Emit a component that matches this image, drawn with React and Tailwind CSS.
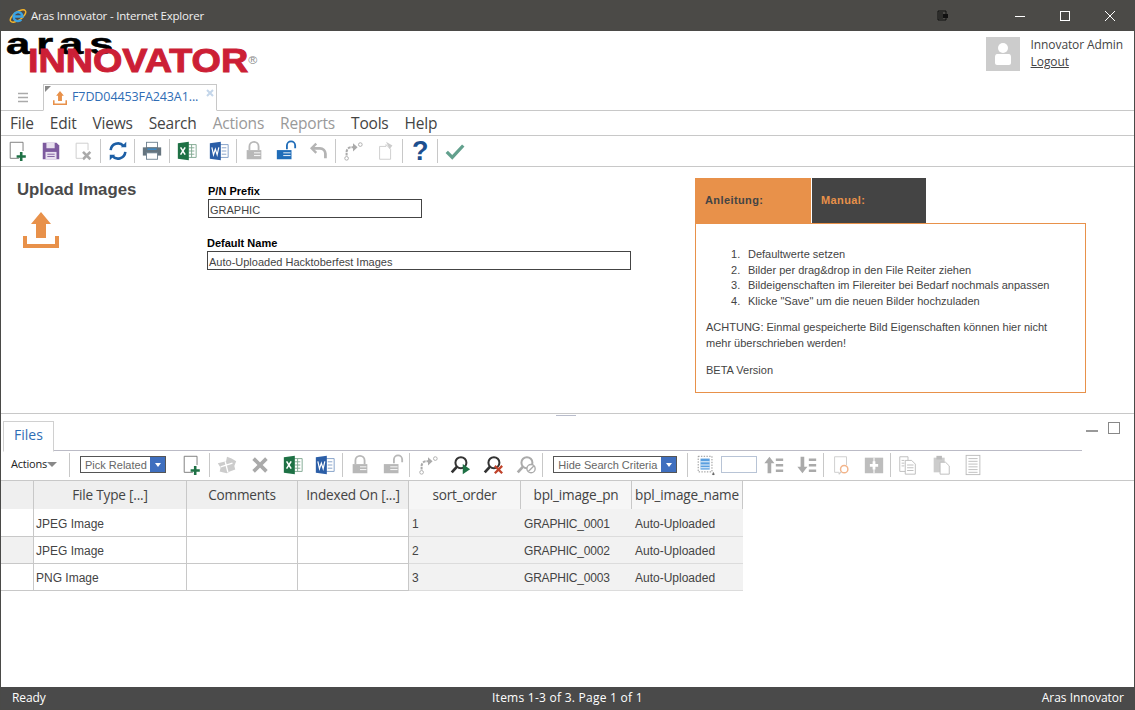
import React from "react";

const seg = "font-['Open_Sans',sans-serif]";
const tah = "font-['Liberation_Sans',sans-serif]";

const I = ({ children, o = 1 }) => (
  <svg width="22" height="22" viewBox="0 0 24 24" fill="none" style={{ opacity: o }}>{children}</svg>
);
const Btn = ({ children }) => <div className="w-[32.5px] h-6 flex items-center justify-center shrink-0">{children}</div>;
const Bt2 = ({ children }) => <div className="w-[32.75px] h-6 flex items-center justify-center shrink-0">{children}</div>;
const Sep = () => <div className="w-px h-[24px] mr-[1px] bg-[#c8c8c8] shrink-0" />;

const New = () => <I><path d="M13 20H3.500V2.500H17.500V12" stroke="#777" /><path d="M15.500 13v10M10.500 18h10" stroke="#1e7145" strokeWidth="2.800" /></I>;
const Save = () => <I><path d="M3 3h15l3 3v15H3z" fill="#7d5a9e" /><rect x="7" y="3" width="9" height="6" fill="#e8e0ef" /><rect x="6" y="13" width="12" height="8" fill="#e8e0ef" /><path d="M8 15.500h8M8 18h8" stroke="#7d5a9e" /></I>;
const Del = () => <I><path d="M11 20H4.500V3.500H17.500V11" stroke="#ccc" /><path d="M12 13l8 8M20 13l-8 8" stroke="#aaa" strokeWidth="2.800" /></I>;
const Refresh = () => <I><path d="M4 11a8 8 0 0 1 14-4.500M20 13a8 8 0 0 1-14 4.500" stroke="#1d5fa5" strokeWidth="2.800" /><path d="M15 8h6V2zM9 16H3v6z" fill="#1d5fa5" /></I>;
const Print = () => <I><rect x="6" y="2.500" width="12" height="6" fill="#fff" stroke="#6d8190" /><path d="M2 8h20v9H2z" fill="#66757f" /><path d="M7 10h10" stroke="#3b8fd0" strokeWidth="1.500" /><rect x="6" y="14" width="12" height="7" fill="#fff" stroke="#6d8190" /></I>;
const Excel = () => <I><path d="M12 5h10v14H12z" fill="#fff" stroke="#7ea68f" /><path d="M14 8.500h6M14 12h6M14 15.500h6M17 5v14" stroke="#7ea68f" /><path d="M2 3.500l12-1.500v20L2 20.500z" fill="#1e7145" /><path d="M5 8l5 8M10 8l-5 8" stroke="#fff" strokeWidth="1.700" /></I>;
const Word = () => <I><path d="M12 5h10v14H12z" fill="#fff" stroke="#7f9cc6" /><path d="M15 8.500h5M15 12h5M15 15.500h5" stroke="#7f9cc6" /><path d="M2 3.500l12-1.500v20L2 20.500z" fill="#2b5ea7" /><path d="M4.200 8l1.800 8 2-6 2 6 1.800-8" stroke="#fff" strokeWidth="1.300" /></I>;
const Lock = ({ c = "#b8b8b8" }) => <I><path d="M7 11V7a5 5 0 0 1 10 0v4" stroke={c} strokeWidth="2" /><path d="M4 11h16v10H4z" fill={c} /><path d="M12 14h7M12 17h7" stroke="#fff" /></I>;
const Unlock = ({ c = "#1f6cb8" }) => <I><path d="M13 10V6a4.500 4.500 0 0 1 9 0v3" stroke={c} strokeWidth="2" /><path d="M2 11h16v10H2z" fill={c} /><path d="M9 14h8M9 17h8" stroke="#fff" /></I>;
const Undo = () => <I><path d="M9 14L4 9l5-5" stroke="#b4b4b4" strokeWidth="2.600" /><path d="M5 9h8a6 6 0 0 1 6 6v5" stroke="#b4b4b4" strokeWidth="3" /></I>;
const Promote = () => <I><circle cx="20" cy="5" r="2" stroke="#aaa" /><circle cx="5" cy="20" r="2" stroke="#aaa" /><path d="M5 17v-4a5 5 0 0 1 5-5h2" stroke="#aaa" strokeWidth="2.200" strokeDasharray="3 1" /><path d="M12 3.500l5 4.500-5 4.500z" fill="#aaa" /></I>;
const DocArrow = () => <I><path d="M5 7h7V5l5 5v11H5z" stroke="#ccc" fill="#fff" /><path d="M12 2l7 4-3 4z" fill="#ccc" /></I>;
const Check = () => <I><path d="M3 13l6 6L21 6" stroke="#62a08d" strokeWidth="3.600" /></I>;
const Glass = ({ c = "#333" }) => <><circle cx="13" cy="9.500" r="6" stroke={c} strokeWidth="2.200" /><path d="M8.500 14L3 20" stroke={c} strokeWidth="3" /></>;
const SearchGo = () => <I><Glass /><path d="M15 11l8 5.500-8 5.500z" fill="#1e7145" /></I>;
const SearchX = () => <I><Glass /><path d="M14 13l8 8M22 13l-8 8" stroke="#c0432b" strokeWidth="2.500" /></I>;
const SearchNo = () => <I><Glass c="#aaa" /><circle cx="17.500" cy="16" r="4.500" fill="#fff" stroke="#aaa" strokeWidth="1.500" /><path d="M14.500 19l6-6" stroke="#aaa" strokeWidth="1.500" /></I>;
const Puzzle = () => <I><path d="M2 10l9-2 1-5 5 2 5 3-2 5 1 4-6 2-3 2-5-1-3-1 1-4z" fill="#ccc" /><path d="M10 8l3 12M5 14l13-4" stroke="#fff" strokeWidth="1.500" /></I>;
const BigX = () => <I><path d="M5 5l14 14M19 5L5 19" stroke="#aaa" strokeWidth="4" /></I>;
const SelectAll = () => <I><rect x="3.500" y="2.500" width="15" height="17" stroke="#888" strokeDasharray="1.500 1.500" /><rect x="6" y="5" width="10" height="12" fill="#5a9fe0" /><path d="M6 8.500h10M6 12h10M6 15h10" stroke="#fff" /><path d="M20 20v3M18.500 22h3" stroke="#555" /></I>;
const SortUp = () => <I><path d="M7 3l5.500 7H9v11H5V10H1.500z" fill="#aaa" /><path d="M14 5h8v2.500h-8zM14 11h8v2.500h-8zM14 17h8v2.500h-8z" fill="#aaa" /></I>;
const SortDown = () => <I><path d="M7 21l5.500-7H9V3H5v11H1.500z" fill="#aaa" /><path d="M14 5h8v2.500h-8zM14 11h8v2.500h-8zM14 17h8v2.500h-8z" fill="#aaa" /></I>;
const DocSearch = () => <I><path d="M10 20H5V3h13v9" stroke="#ccc" /><circle cx="15.500" cy="16.500" r="4" stroke="#f2b48a" strokeWidth="1.600" /><path d="M12 19.500l-2.500 2.500" stroke="#ccc" strokeWidth="1.500" /></I>;
const Cross = () => <I><path d="M2 4h20v17H2z" fill="#bdbdbd" /><path d="M12 4v17" stroke="#fff" strokeWidth="1.200" /><path d="M12 8v9M7.500 12.500h9" stroke="#fff" strokeWidth="3" /></I>;
const CopyD = () => <I><path d="M3 3h9v16H3z" fill="#fff" stroke="#bbb" /><path d="M9 7h7l4 4v11H9z" fill="#fff" stroke="#bbb" /><path d="M5 7h3M5 10h3M5 13h3M11 12h7M11 15h7M11 18h7" stroke="#bbb" /></I>;
const Paste = () => <I><path d="M4 4h12v16H4z" fill="#ccc" /><rect x="7" y="2" width="6" height="4" fill="#bbb" /><path d="M11 9h6l4 4v9H11z" fill="#fff" stroke="#bbb" /></I>;
const Lines = () => <I><rect x="4.500" y="1.500" width="15" height="21" stroke="#bbb" fill="#fff" /><path d="M7 5h10M7 8h10M7 11h10M7 14h10M7 17h10M7 20h10" stroke="#bbb" /></I>;
const UploadIcon = ({ s }) => (
  <svg width={s} height={s} viewBox="0 0 36 36" fill="#e8914a"><path d="M18 0L28 12H23V26H13V12H8zM0 24H4V32H32V24H36V36H0z" /></svg>
);

const Caret = () => (
  <div className="w-[15px] h-full bg-[#3f6fbf] flex items-center justify-center">
    <div className="w-0 h-0 border-x-[3.500px] border-x-transparent border-t-[4px] border-t-white" />
  </div>
);
const Sel = ({ label, cls }) => (
  <div className={`h-[17px] border border-[#555] flex items-stretch shrink-0 ${cls}`}>
    <div className={`flex-1 pl-[4px] text-[11px] leading-[16px] text-[#666] whitespace-nowrap ${tah}`}>{label}</div>
    <Caret />
  </div>
);

const colCls = "grid grid-cols-[33px_153px_111px_111px_112px_111px_111px]";
const Row = ({ type, n, pn, h, odd }) => (
  <div className={`${colCls} w-[742px] ${h} text-[12px] text-[#444] ${tah}`}>
    <div className={`border-r border-b border-[#c8c8c8] ${odd ? "bg-white" : "bg-[#f1f1f1]"}`} />
    <div className="border-r border-b border-[#c8c8c8] pl-[2px] pt-[2px] flex items-center bg-white">{type}</div>
    <div className="border-r border-b border-[#c8c8c8] bg-white" />
    <div className="border-r border-b border-[#c8c8c8] bg-white" />
    <div className="border-b border-[#dcdcdc] bg-[#f2f2f2] pl-[3px] pt-[2px] flex items-center">{n}</div>
    <div className="border-b border-[#dcdcdc] bg-[#f2f2f2] pl-[3px] pt-[2px] flex items-center tracking-[-0.2px]">{pn}</div>
    <div className="border-b border-[#dcdcdc] bg-[#f2f2f2] pl-[3px] pt-[2px] flex items-center">Auto-Uploaded</div>
  </div>
);
const Li = ({ n, children }) => <li className="flex"><span className="w-[17px] shrink-0">{n}.</span><span>{children}</span></li>;

export default function App() {
  return (
    <div className={`w-[1135px] h-[710px] flex flex-col overflow-hidden bg-white border-x border-b border-[#4a4a48] ${seg}`}>
      {/* title bar */}
      <div className="h-[31px] bg-[#4b4a47] flex items-center shrink-0 text-white">
        <div className="ml-[8px] mr-[4px] w-[18px] h-[18px]">
          <svg width="18" height="18" viewBox="0 0 18 18" fill="none">
            <ellipse cx="9" cy="9" rx="9" ry="4" transform="rotate(-35 9 9)" stroke="#f3b32a" strokeWidth="1.500" />
            <path d="M4.500 9.500h9a4.500 4.500 0 1 0-1.200 3.200" stroke="#3aa3e3" strokeWidth="2.400" />
          </svg>
        </div>
        <div className="text-[11.500px] text-[#f0f0f0] tracking-[-0.2px]">Aras Innovator - Internet Explorer</div>
        <div className="ml-auto flex items-center">
          <svg width="12" height="12" viewBox="0 0 12 12" fill="none" className="mr-[65px]"><path d="M1 1h8v9H1z" stroke="#111" /><path d="M3 2v7M5 2v7" stroke="#111" /><rect x="6" y="4" width="5" height="4" fill="#111" /></svg>
          <svg width="12" height="12" viewBox="0 0 12 12" className="mr-[33px]"><path d="M1 6.500h10" stroke="#fff" /></svg>
          <svg width="12" height="12" viewBox="0 0 12 12" fill="none" className="mr-[33px]"><rect x="1.500" y="1.500" width="9" height="9" stroke="#fff" /></svg>
          <svg width="12" height="12" viewBox="0 0 12 12" className="mr-[18px]"><path d="M1 1l10 10M11 1L1 11" stroke="#fff" /></svg>
        </div>
      </div>

      {/* header */}
      <div className="h-[53px] flex justify-between shrink-0 relative">
        <div className="pl-[5px] pt-[2px] relative">
          <div className="text-[29px] leading-[22px] h-[21px] font-bold text-black font-['Liberation_Sans',sans-serif] tracking-[4px] origin-left scale-x-[1.5] [-webkit-text-stroke:0.5px_#000]">aras</div>
          <div className="ml-[22px] -mt-[7px] text-[34px] leading-[26px] font-bold text-[#cc1f36] font-['Liberation_Sans',sans-serif] origin-left scale-x-[1.11] [-webkit-text-stroke:1px_#cc1f36] whitespace-nowrap">
            INNOVATOR<span className="text-[11px] align-top font-normal text-[#888] [-webkit-text-stroke:0px]">®</span>
          </div>
        </div>
        <div className="flex pt-[6px] pr-[11px]">
          <div className="w-[34px] h-[34px] bg-[#cccccc] flex items-center justify-center mr-[11px]">
            <svg width="16" height="24" viewBox="0 0 16 24" fill="#fff"><circle cx="8" cy="6" r="5" /><path d="M2 12h12c1 0 2 1 2 3v6c0 1-1 2-2 2H2c-1 0-2-1-2-2v-6c0-2 1-3 2-3z" /></svg>
          </div>
          <div className="text-[12px] leading-[17px] text-[#444] -mt-[1px] tracking-[-0.1px]">
            <div>Innovator Admin</div>
            <div className="underline">Logout</div>
          </div>
        </div>
      </div>

      {/* tab strip */}
      <div className="h-[27px] flex items-end border-b border-[#c8c8c8] shrink-0 relative">
        <div className="w-[42px] h-full flex items-center justify-center pl-[1px]">
          <svg width="12" height="11" viewBox="0 0 12 11"><path d="M1 1.500h10M1 5.500h10M1 9.500h10" stroke="#aaa" strokeWidth="1.500" /></svg>
        </div>
        <div className="w-[174px] h-[27px] -mb-px border border-[#c8c8c8] border-b-white bg-white flex items-center relative pl-[9px]">
          <div className="absolute left-[1px] top-[1px] w-0 h-0 border-t-[6px] border-r-[6px] border-t-[#888] border-r-transparent" />
          <UploadIcon s={14} />
          <span className="ml-[5px] text-[12.500px] text-[#2f6db5] tracking-[-0.1px]">F7DD04453FA243A1...</span>
          <svg width="8" height="8" viewBox="0 0 8 8" className="absolute right-[2px] top-[4px]"><path d="M1 1l6 6M7 1L1 7" stroke="#c4d6ea" strokeWidth="2" /></svg>
        </div>
      </div>

      {/* menu */}
      <div className="h-[25px] pt-[1px] flex items-center gap-[16px] pl-[9px] border-b border-[#c8c8c8] text-[15.500px] text-[#444] shrink-0 tracking-[-0.2px]">
        <span>File</span><span>Edit</span><span>Views</span><span>Search</span>
        <span className="text-[#999]">Actions</span><span className="text-[#999]">Reports</span>
        <span>Tools</span><span>Help</span>
      </div>

      {/* toolbar */}
      <div className="h-[31px] flex items-center pl-[1px] border-b border-[#c8c8c8] shrink-0">
        <Btn><New /></Btn><Btn><Save /></Btn><Btn><Del /></Btn><Sep />
        <Btn><Refresh /></Btn><Sep />
        <Btn><Print /></Btn><Sep />
        <Btn><Excel /></Btn><Btn><Word /></Btn><Sep />
        <Btn><Lock /></Btn><Btn><Unlock /></Btn><Btn><Undo /></Btn><Sep />
        <Btn><Promote /></Btn><Btn><DocArrow /></Btn><Sep />
        <Btn><span className="text-[27px] leading-none font-bold text-[#1c4f8f] font-['Liberation_Sans',sans-serif]">?</span></Btn><Sep />
        <Btn><Check /></Btn>
      </div>

      {/* form */}
      <div className="h-[247px] flex shrink-0 border-b border-[#c8c8c8] relative">
        <div className="w-[206px] pl-[16px] pt-[13px] shrink-0">
          <div className={`text-[16.800px] leading-[20px] font-bold text-[#4a4a4a] ${tah}`}>Upload Images</div>
          <div className="mt-[12px] ml-[6px]"><UploadIcon s={36} /></div>
        </div>
        <div className={`w-[488px] pt-[17px] shrink-0 ${tah}`}>
          <div className="ml-[1px] text-[11px] leading-[15px] font-bold text-black">P/N Prefix</div>
          <div className="ml-[1px] w-[214px] h-[19px] border border-[#444] text-[11px] leading-[21px] pl-[1px] text-[#444]">GRAPHIC</div>
          <div className="mt-[18px] text-[11px] leading-[15px] font-bold text-black">Default Name</div>
          <div className="w-[424px] h-[19px] border border-[#444] text-[11px] leading-[20px] pl-[1px] text-[#444]">Auto-Uploaded Hacktoberfest Images</div>
        </div>
        <div className={`w-[391px] pt-[11px] shrink-0 ${tah}`}>
          <div className="flex h-[45px]">
            <div className="w-[116px] bg-[#e8914a] text-[#444] font-bold text-[11px] pl-[10px] flex items-center mr-px tracking-[0.4px]">Anleitung:</div>
            <div className="w-[114px] bg-[#444444] text-[#e8914a] font-bold text-[11px] pl-[9px] flex items-center tracking-[0.4px]">Manual:</div>
          </div>
          <div className="h-[170px] border border-[#e8914a] text-[11px] leading-[15.600px] text-[#444] pl-[10px] pr-[10px] pt-[23px]">
            <ol className="pl-[25px]">
              <Li n="1">Defaultwerte setzen</Li>
              <Li n="2">Bilder per drag&amp;drop in den File Reiter ziehen</Li>
              <Li n="3">Bildeigenschaften im Filereiter bei Bedarf nochmals anpassen</Li>
              <Li n="4">Klicke "Save" um die neuen Bilder hochzuladen</Li>
            </ol>
            <p className="mt-[11px]">ACHTUNG: Einmal gespeicherte Bild Eigenschaften können hier nicht mehr überschrieben werden!</p>
            <p className="mt-[11px]">BETA Version</p>
          </div>
        </div>
        <div className="absolute left-[555px] -bottom-[3px] w-[20px] h-px bg-[#b8bccb]" />
      </div>

      {/* Files tab strip */}
      <div className="h-[37px] flex items-end shrink-0 relative">
        <div className="ml-[2px] w-[51px] h-[31px] pb-[4px] border border-[#d0d0d0] border-b-white -mb-px bg-white z-10 flex items-center justify-center text-[14px] text-[#2f6db5]">Files</div>
        <div className="w-[1028px] border-b border-[#bbbbc6]" />
        <div className="absolute right-[14px] top-[8px] flex items-start gap-[10px]">
          <div className="w-[12px] h-[2px] bg-[#999] mt-[8px]" />
          <div className="w-[12px] h-[12px] border border-[#888] bg-white" />
        </div>
      </div>

      {/* lower toolbar */}
      <div className="h-[30px] flex items-center pb-[2px] border-b border-[#c8c8c8] shrink-0">
        <div className="pl-[10px] w-[46px] text-[11px] text-[#222] tracking-[-0.2px]">Actions</div>
        <div className="w-0 h-0 border-x-[5px] border-x-transparent border-t-[5px] border-t-[#888]" />
        <div className="w-[12px]" />
        <div className="w-px h-[24px] bg-[#c8c8c8] mr-[10px]" />
        <Sel label="Pick Related" cls="w-[86px] mr-[10px]" />
        <Bt2><New /></Bt2><Sep />
        <Bt2><Puzzle /></Bt2><Bt2><BigX /></Bt2><Bt2><Excel /></Bt2><Bt2><Word /></Bt2><Sep />
        <Bt2><Lock /></Bt2><Bt2><Unlock c="#b8b8b8" /></Bt2><Sep />
        <Bt2><Promote /></Bt2><Bt2><SearchGo /></Bt2><Bt2><SearchX /></Bt2><Bt2><SearchNo /></Bt2><Sep />
        <div className="w-[9px]" />
        <Sel label="Hide Search Criteria" cls="w-[124px] mr-[10px]" />
        <div className="w-px h-[24px] bg-[#c8c8c8]" />
        <div className="w-[1px]" />
        <Btn><SelectAll /></Btn>
        <div className="w-[36px] h-[17px] border border-[#b8c4d6] shrink-0 ml-[-1px] mr-[1px]" />
        <Btn><SortUp /></Btn><Btn><SortDown /></Btn><Sep />
        <Btn><DocSearch /></Btn><Btn><Cross /></Btn><Sep />
        <Btn><CopyD /></Btn><Btn><Paste /></Btn><Btn><Lines /></Btn>
      </div>

      {/* grid */}
      <div className="flex-1 flex flex-col min-h-0 bg-white">
        <div className={`${colCls} w-[742px] h-[28px] text-[13.600px] text-[#444] tracking-[-0.2px] shrink-0`}>
          <div className="bg-[#efefef] border-r border-[#c8c8c8]" />
          <div className="bg-[#efefef] border-r border-[#c8c8c8] flex items-center justify-center">File Type [...]</div>
          <div className="bg-[#efefef] border-r border-[#c8c8c8] flex items-center justify-center">Comments</div>
          <div className="bg-[#efefef] border-r border-[#c8c8c8] flex items-center justify-center">Indexed On [...]</div>
          <div className="bg-[#f6f6f6] border-r border-[#c8c8c8] flex items-center justify-center">sort_order</div>
          <div className="bg-[#f6f6f6] border-r border-[#c8c8c8] flex items-center justify-center">bpl_image_pn</div>
          <div className="bg-[#f6f6f6] border-r border-[#c8c8c8] flex items-center justify-center">bpl_image_name</div>
        </div>
        <Row type="JPEG Image" n="1" pn="GRAPHIC_0001" h="h-[28px]" odd />
        <Row type="JPEG Image" n="2" pn="GRAPHIC_0002" h="h-[27px]" />
        <Row type="PNG Image" n="3" pn="GRAPHIC_0003" h="h-[27px]" odd />
      </div>

      {/* status bar */}
      <div className="h-[22px] pb-[1px] bg-[#4a4a4a] text-white text-[12px] flex items-center justify-between shrink-0 pl-[11px] pr-[10px] relative">
        <span className="tracking-[-0.1px]">Ready</span>
        <span className="absolute left-[491px] tracking-[0.25px]">Items 1-3 of 3. Page 1 of 1</span>
        <span>Aras Innovator</span>
      </div>
    </div>
  );
}
